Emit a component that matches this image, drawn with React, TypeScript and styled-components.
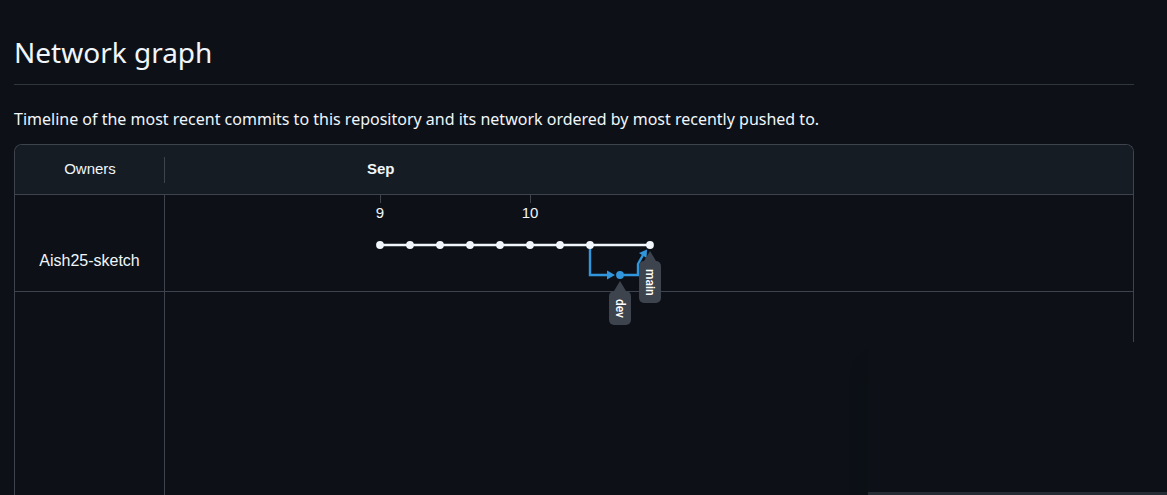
import React from "react";
import styled, { createGlobalStyle } from "styled-components";

const line = "#3d444d";
const trunk = "#f0f6fc";
const branch = "#3296dc";

const GlobalStyle = createGlobalStyle`
  * { box-sizing: border-box; }
  html, body, #root { height: 100%; }
  body {
    margin: 0;
    background: #0d1117;
    color: #f0f6fc;
    font-family: "Noto Sans", sans-serif;
    overflow: hidden;
  }
`;

const Page = styled.main`
  height: 100%;
  display: flex;
  flex-direction: column;
  padding: 32px 33px 0 14px;
`;

const Title = styled.h1`
  margin: 0 0 20px;
  padding-bottom: 12px;
  border-bottom: 1px solid ${line}b3;
  font-size: 28px;
  line-height: 40px;
  font-weight: 400;
`;

const Intro = styled.p`
  margin: 0 0 11px;
  font-size: 16px;
  line-height: 28px;
`;

const Network = styled.section`
  flex: 1;
  display: flex;
  flex-direction: column;
  border: 1px solid ${line};
  border-bottom: 0;
  border-radius: 8px 8px 0 0;
  font-family: "Liberation Sans", Arial, sans-serif;
`;

const Row = styled.div<{ $fill?: boolean }>`
  display: grid;
  grid-template-columns: 150px 1fr;
  flex: ${(p) => (p.$fill ? "1" : "none")};
`;

const HeaderRow = styled(Row)`
  padding: 12px 0 11px;
  background: #151c23;
  border-bottom: 1px solid ${line};
  border-radius: 7px 7px 0 0;
`;

const OwnerRow = styled(Row)`
  border-bottom: 1px solid ${line};
`;

const OwnersHeading = styled.div`
  padding: 0 0 2px 1px;
  border-right: 1px solid ${line};
  font-size: 15px;
  line-height: 24px;
  text-align: center;
`;

const OwnerCell = styled.div`
  display: flex;
  justify-content: center;
  align-items: flex-end;
  padding-bottom: 18px;
  border-right: 1px solid ${line};
  font-size: 16px;
  line-height: 24px;
`;

const Month = styled.div`
  padding-left: 202px;
  font-size: 15px;
  line-height: 24px;
  font-weight: 700;
`;

const Timeline = styled.div`
  position: relative;
  z-index: 1;
  min-width: 0;
`;

const Chart = styled.svg`
  display: block;
  width: 100%;
  height: 96px;
  overflow: visible;
`;

const DayLabel = styled.text`
  fill: #f0f6fc;
  font-size: 15px;
  text-anchor: middle;
`;

const TagLabel = styled.text`
  fill: #ffffff;
  font-family: Roboto, sans-serif;
  font-size: 12px;
  font-weight: 500;
`;

const Popup = styled.aside`
  position: fixed;
  z-index: 2;
  right: 0;
  bottom: 0;
  width: 299px;
  height: 153px;
  background: #0d1117;
  border-bottom: 3px solid #262c34;
  border-radius: 10px 0 0 0;
  box-shadow: 0 24px 16px #0c1015;
`;

const days = [
  { x: 215, label: "9" },
  { x: 365, label: "10" },
];

const commits = [215, 245, 275, 305, 335, 365, 395, 425, 485];

function Tag({ x, y, height, name }: { x: number; y: number; height: number; name: string }) {
  return (
    <g transform={`translate(${x} ${y})`}>
      <path d="M0 -1 L6 9 H-6 Z" fill={line} />
      <rect x="-11" y="9" width="22" height={height} rx="5" fill={line} />
      <TagLabel transform="translate(-4 17) rotate(90)">{name}</TagLabel>
    </g>
  );
}

export default function App() {
  return (
    <>
      <GlobalStyle />
      <Page>
        <Title>Network graph</Title>
        <Intro>
          Timeline of the most recent commits to this repository and its network ordered by most
          recently pushed to.
        </Intro>
        <Network>
          <HeaderRow>
            <OwnersHeading>Owners</OwnersHeading>
            <Month>Sep</Month>
          </HeaderRow>
          <OwnerRow>
            <OwnerCell>Aish25-sketch</OwnerCell>
            <Timeline>
              <Chart role="img" aria-label="Commits on main and dev">
                {days.map((d) => (
                  <g key={d.label}>
                    <rect x={d.x} y="0" width="1" height="8" fill={line} />
                    <DayLabel x={d.x} y="23">{d.label}</DayLabel>
                  </g>
                ))}
                <path d="M215 50 H485" stroke={trunk} strokeWidth="2.4" />
                <path
                  d="M425 50 V80 H444 M455 80 H473 V69 L478 60"
                  fill="none"
                  stroke={branch}
                  strokeWidth="2.4"
                />
                <path d="M442 75.5 L450 80 L442 84.5 Z" fill={branch} />
                <path d="M482 54.5 L481.5 63 L474 58 Z" fill={branch} />
                {commits.map((x) => (
                  <circle key={x} cx={x} cy="50" r="3.9" fill={trunk} />
                ))}
                <circle cx="455" cy="80" r="3.9" fill={branch} />
                <Tag x={455} y={87} height={34} name="dev" />
                <Tag x={485} y={57} height={42} name="main" />
              </Chart>
            </Timeline>
          </OwnerRow>
          <Row $fill>
            <OwnerCell />
          </Row>
        </Network>
      </Page>
      <Popup />
    </>
  );
}
